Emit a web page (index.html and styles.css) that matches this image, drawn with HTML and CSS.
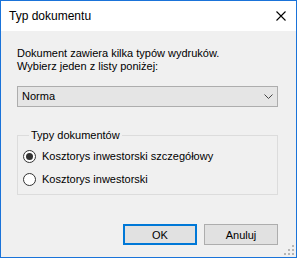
FILE: index.html
```html
<!DOCTYPE html>
<html lang="pl">
<head>
    <meta charset="UTF-8">
    <title>Typ dokumentu</title>
    <link rel="stylesheet" href="styles.css">
</head>
<body>
    <div class="window">
        <div class="titlebar">
            <span class="title">Typ dokumentu</span>
            <svg class="close" width="10" height="10" viewBox="0 0 10 10">
                <path d="M0.5 0.5 L9.5 9.5 M9.5 0.5 L0.5 9.5" stroke="#000" stroke-width="1.1" fill="none"/>
            </svg>
        </div>

        <div class="content">
            <p class="prompt">Dokument zawiera kilka typów wydruków.<br>Wybierz jeden z listy poniżej:</p>

            <div class="combo">
                <span>Norma</span>
                <svg width="9" height="5" viewBox="0 0 9 5">
                    <path d="M0.5 0.5 L4.5 4.5 L8.5 0.5" stroke="#444" stroke-width="1" fill="none"/>
                </svg>
            </div>

            <fieldset class="group">
                <legend>Typy dokumentów</legend>
                <label class="radio"><span class="dot checked"></span>Kosztorys inwestorski szczegółowy</label>
                <label class="radio"><span class="dot"></span>Kosztorys inwestorski</label>
            </fieldset>

            <div class="buttons">
                <button class="btn default">OK</button>
                <button class="btn">Anuluj</button>
            </div>
        </div>

        <!-- uchwyt zmiany rozmiaru -->
        <svg class="grip" width="11" height="11" viewBox="0 0 11 11">
            <rect x="8" y="0" width="2" height="2"/>
            <rect x="4" y="4" width="2" height="2"/>
            <rect x="8" y="4" width="2" height="2"/>
            <rect x="0" y="8" width="2" height="2"/>
            <rect x="4" y="8" width="2" height="2"/>
            <rect x="8" y="8" width="2" height="2"/>
        </svg>
    </div>
</body>
</html>
```

FILE: styles.css
```css
body {
    margin: 0;
    font-family: 'Liberation Sans', Arial, sans-serif;
    color: #000;
}
.window {
    position: relative;
    width: 297px;
    height: 258px;
    box-sizing: border-box;
    border: 1px solid #1a73d9;
    background: #f0f0f0;
    display: flex;
    flex-direction: column;
}
.titlebar {
    height: 30px;
    background: #fff;
    display: flex;
    align-items: center;
    justify-content: space-between;
    padding: 0 10px 1px 8px;
    box-sizing: border-box;
}
.title {
    font-size: 12px;
}
.content {
    flex: 1;
    display: flex;
    flex-direction: column;
    padding: 16px 18px 0 16px;
    font-size: 11px;
    line-height: 13px;
}
.prompt {
    margin: 0;
}
.combo {
    margin-top: 13px;
    height: 21px;
    box-sizing: border-box;
    border: 1px solid #adadad;
    background: #e5e5e5;
    display: flex;
    align-items: center;
    justify-content: space-between;
    padding: 0 4px 0 4px;
}
.group {
    margin: 22px 0 0 0;
    padding: 6px 0 6px 5px;
    border: 1px solid #dcdcdc;
    display: flex;
    flex-direction: column;
    gap: 6px;
}
.group legend {
    margin-left: 6px;
    padding: 0 2px;
    line-height: 13px;
}
.radio {
    height: 17px;
    display: flex;
    align-items: center;
    gap: 6px;
}
.dot {
    width: 13px;
    height: 13px;
    box-sizing: border-box;
    border: 1px solid #333;
    border-radius: 50%;
    background: #fff;
    display: flex;
    align-items: center;
    justify-content: center;
}
.dot.checked::after {
    content: '';
    width: 7px;
    height: 7px;
    border-radius: 50%;
    background: #333;
}
.buttons {
    margin-top: 29px;
    display: flex;
    justify-content: flex-end;
    gap: 7px;
}
.btn {
    width: 74px;
    height: 21px;
    box-sizing: border-box;
    border: 1px solid #adadad;
    background: #e1e1e1;
    font-family: inherit;
    font-size: 11px;
    color: #000;
    padding: 0;
}
.btn.default {
    border: 2px solid #0078d7;
}
.grip {
    position: absolute;
    right: 1px;
    bottom: 1px;
    fill: #b5b5b5;
}
```
